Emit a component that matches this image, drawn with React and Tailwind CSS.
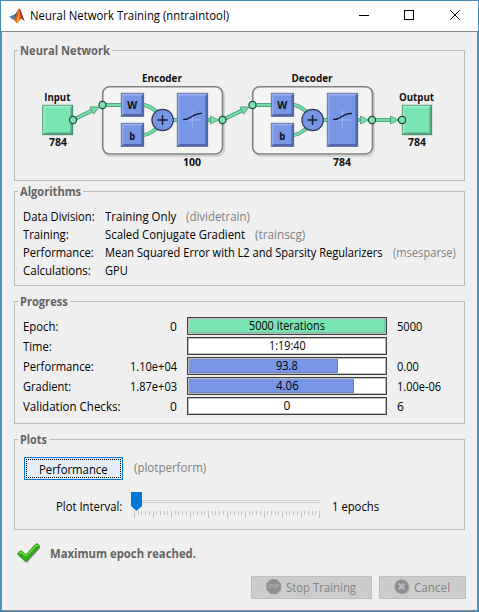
import { useLayoutEffect, useRef, useState } from 'react';

// Text condensed or widened horizontally so it occupies exactly `w` pixels.
function Fit({ w, className = '', children }) {
  const ref = useRef(null);
  const [scale, setScale] = useState(1);
  useLayoutEffect(() => {
    setScale(w / ref.current.offsetWidth);
  }, [w, children]);
  return (
    <span className={'block shrink-0 ' + className} style={{ width: w }}>
      <span ref={ref} className="inline-block origin-left whitespace-nowrap align-top" style={{ transform: `scaleX(${scale})` }}>
        {children}
      </span>
    </span>
  );
}

function Group({ title, w, className, children }) {
  return (
    <section className={'ml-3 w-[451px] border border-[#bababa] ' + className}>
      <div className="-mt-[9px] ml-[3px] flex h-4 w-fit bg-[#efefef] pr-0.5 pl-0.5 font-bold leading-[18px] text-[#646464]">
        <Fit w={w}>{title}</Fit>
      </div>
      {children}
    </section>
  );
}

function Square({ x, y, w, h, kind }) {
  const c = kind === 'green'
    ? { f: '#7ae5b3', hi: '#9df0cb', lo: '#58a683', s: '#4b8a6c' }
    : { f: '#7796e6', hi: '#9ab2f2', lo: '#4f67ad', s: '#5d6b94' };
  return (
    <g>
      <rect x={x} y={y} width={w} height={h} fill={c.f} />
      <path d={`M${x} ${y}h${w}l-2.5 2.5h${5 - w}z`} fill={c.hi} />
      <path d={`M${x} ${y}l2.5 2.5v${h - 5}L${x} ${y + h}z`} fill={c.hi} opacity=".7" />
      <path d={`M${x + w} ${y}v${h}h${-w}l2.5 -2.5h${w - 5}v${5 - h}z`} fill={c.lo} />
      <rect x={x + 0.25} y={y + 0.25} width={w - 0.5} height={h - 0.5} fill="none" stroke={c.s} strokeWidth=".8" />
    </g>
  );
}

function Wire({ d }) {
  return (
    <g fill="none">
      <path d={d} stroke="#4f9876" strokeWidth="4" />
      <path d={d} stroke="#74dbab" strokeWidth="2.4" />
    </g>
  );
}

function Head({ x, y, angle = 0 }) {
  return <path d="M0 0L-8 -4V4Z" fill="#74dfae" stroke="#4f9876" strokeWidth=".8" transform={`translate(${x} ${y}) rotate(${angle})`} />;
}

function Port({ x, y }) {
  return <circle cx={x} cy={y} r="3.6" fill="#7ae5b3" stroke="#26483a" strokeWidth="1.2" />;
}

function Caption({ x, y, w, children }) {
  return (
    <text x={x} y={y} textAnchor="middle" textLength={w} lengthAdjust="spacingAndGlyphs" className="text-[10.5px] font-bold" fill="#111">
      {children}
    </text>
  );
}

function Layer({ x, name, nameW, size }) {
  return (
    <g transform={`translate(${x} 0)`}>
      <rect x="104" y="88" width="120" height="68" rx="7" fill="none" stroke="#d2d2d2" strokeWidth="2" />
      <rect x="102.7" y="86.7" width="119.8" height="67.3" rx="7" fill="#f4f4f4" stroke="#818181" strokeWidth="1.6" />
      <Wire d="M103 105H122" />
      <Wire d="M143 105C150 105 152 109 159 113" />
      <Wire d="M143 135C150 135 152 131 159 127" />
      <Wire d="M170 120H178" />
      <Wire d="M207 120H213" />
      <Head x={218.5} y={120} />
      <Square x={121} y={93} w={23} h={23.5} kind="blue" />
      <Square x={121} y={123} w={23} h={23.5} kind="blue" />
      <Square x={177} y={93} w={31} h={53.5} kind="blue" />
      <circle cx="162.6" cy="120" r="10.7" fill="#7796e6" stroke="#30384f" strokeWidth="1.2" />
      <path d="M157.5 120h10M162.5 115v10" stroke="#161c2d" strokeWidth="1.4" />
      <path d="M183 120h18M192.3 110.5v18.5" stroke="#a9baf0" strokeWidth=".9" />
      <path d="M183 119.7C193 119.7 190 113.5 202 113.3" fill="none" stroke="#10182c" strokeWidth="1.2" />
      <Caption x={132.2} y={109} w={10}>W</Caption>
      <Caption x={132.2} y={139.5} w={6}>b</Caption>
      <Caption x={162} y={81.5} w={nameW}>{name}</Caption>
      <Caption x={192} y={166} w={18}>{size}</Caption>
      <Port x={102.5} y={105} />
    </g>
  );
}

function Network() {
  return (
    <svg className="-mt-2 block h-[130px] w-[449px]" viewBox="15 50 449 130">
      <Wire d="M73 120L95 109" />
      <Layer x={0} name="Encoder" nameW={40} size="100" />
      <Wire d="M222.5 120L245 109" />
      <Layer x={150} name="Decoder" nameW={41} size="784" />
      <Wire d="M372 120H394" />
      <Head x={99} y={107} angle={-26} />
      <Head x={249} y={107} angle={-26} />
      <Head x={398.5} y={120} />
      <Square x={42.5} y={105} w={30.5} h={30} kind="green" />
      <Square x={402} y={105} w={30} h={30} kind="green" />
      <Port x={73} y={120} />
      <Port x={222.5} y={120} />
      <Port x={372} y={120} />
      <Port x={402} y={120} />
      <Caption x={57.3} y={100.5} w={26}>Input</Caption>
      <Caption x={58} y={146} w={18}>784</Caption>
      <Caption x={416.5} y={100.5} w={35}>Output</Caption>
      <Caption x={417} y={146} w={18}>784</Caption>
    </svg>
  );
}

const algorithms = [
  ['Data Division:', 72, 'Training Only', 71, '(dividetrain)', 64],
  ['Training:', 46, 'Scaled Conjugate Gradient', 140, '(trainscg)', 50],
  ['Performance:', 71, 'Mean Squared Error with L2 and Sparsity Regularizers', 278, '(msesparse)', 63],
  ['Calculations:', 68, 'GPU', 23],
];

const progress = [
  { label: 'Epoch:', lw: 36, from: '0', fw: 7, text: '5000 iterations', tw: 76, to: '5000', ow: 25, fill: 'w-[196px] bg-[#7ae5b3] border-[#67c89b]' },
  { label: 'Time:', lw: 29, text: '1:19:40', tw: 37 },
  { label: 'Performance:', lw: 71, from: '1.10e+04', fw: 47, text: '93.8', tw: 22, to: '0.00', ow: 22, fill: 'w-[149px] bg-[#7796e6] border-[#6580c8]' },
  { label: 'Gradient:', lw: 48, from: '1.87e+03', fw: 47, text: '4.06', tw: 23, to: '1.00e-06', ow: 44, fill: 'w-[165px] bg-[#7796e6] border-[#6580c8]' },
  { label: 'Validation Checks:', lw: 97, from: '0', fw: 7, text: '0', tw: 7, to: '6', ow: 7 },
];

function ProgressRow({ row }) {
  return (
    <div className="flex h-[18px] leading-5">
      <div className="w-[107px]"><Fit w={row.lw}>{row.label}</Fit></div>
      <div className="flex w-[47px] justify-end">{row.from && <Fit w={row.fw}>{row.from}</Fit>}</div>
      <div className="ml-2.5 grid h-[18px] w-[200px] border border-[#404040] bg-white">
        <div className="col-start-1 row-start-1 border border-[#bcbcbc]">
          {row.fill && <div className={'h-3.5 border-r border-b ' + row.fill} />}
        </div>
        <div className="z-10 col-start-1 row-start-1 flex justify-center leading-[15px]">
          <Fit w={row.tw}>{row.text}</Fit>
        </div>
      </div>
      <div className="ml-2.5">{row.to && <Fit w={row.ow}>{row.to}</Fit>}</div>
    </div>
  );
}

function Slider() {
  return (
    <svg className="block h-[27px] w-[192px]" viewBox="130 491 192 27">
      <rect x="136.5" y="500.5" width="183" height="2" fill="#e9e9e9" stroke="#d3d3d3" />
      {Array.from({ length: 51 }, (_, i) => (
        <rect key={i} x={Math.round(134 + i * 3.7)} y="511" width="1" height={i % 5 === 0 ? 7 : 4} fill="#c2c2c2" />
      ))}
      <path d="M131 492h11v14l-5.5 5l-5.5 -5z" fill="#0078d7" />
    </svg>
  );
}

function MatlabLogo() {
  return (
    <svg className="ml-2 h-4 w-4" viewBox="0 0 16 16">
      <path d="M0 8.8L5 6.8L7.5 8.7L4.2 11.8Z" fill="#3f83b4" />
      <path d="M5 6.8C7 6.5 8 3 10 .5L8.5 7L6.2 10Z" fill="#285d83" />
      <path d="M10 .4C8.6 2 8 7 4.2 11.8C6 11.5 7 15.5 8.3 15.2C10 14.7 11 10.5 12.7 10.8L15.8 13C13.5 10 12 .5 10 .4Z" fill="#df5a22" />
      <path d="M10 .4C9.5 5 9 9 7.2 14C8 15.7 9 14.7 9.8 13.3C10.5 9 10.8 4 10 .4Z" fill="#f5a335" />
      <path d="M10.2 1C11.5 4 11.5 8 12.7 10.8L15.8 13C13.5 9 12 1 10.2 1Z" fill="#a52c22" />
    </svg>
  );
}

export default function App() {
  return (
    <div className="flex h-[612px] w-[479px] flex-col border border-[#4a8ab5] bg-white font-['Open_Sans',sans-serif] text-[12px] text-black">
      <header className="flex h-[30px] items-center">
        <MatlabLogo />
        <Fit w={199} className="ml-[5px] leading-[30px]">Neural Network Training (nntraintool)</Fit>
        <svg className="ml-auto h-[30px] w-[139px]" viewBox="339 1 139 30" fill="none" stroke="#000">
          <path d="M359 15.5h10" />
          <rect x="404.5" y="10.5" width="9" height="9" />
          <path d="M450.3 10.3l9.4 9.4M459.7 10.3l-9.4 9.4" />
        </svg>
      </header>
      <main className="h-[580px] border border-[#868895] bg-[#efefef]">
        <Group title="Neural Network" w={90} className="mt-[18px] h-[131px]">
          <Network />
        </Group>

        <Group title="Algorithms" w={61} className="mt-2.5 h-[95px]">
          <div className="mt-[9px] ml-2">
            {algorithms.map(([label, lw, value, vw, fn, fw]) => (
              <div key={label} className="flex h-[18px] leading-[18px]">
                <div className="w-[82px]"><Fit w={lw}>{label}</Fit></div>
                <Fit w={vw}>{value}</Fit>
                {fn && <Fit w={fw} className="ml-2.5 text-[#808080]">{fn}</Fit>}
              </div>
            ))}
          </div>
        </Group>

        <Group title="Progress" w={48} className="mt-[15px] h-[123px]">
          <div className="mt-2 ml-2 flex flex-col gap-0.5">
            {progress.map((row) => <ProgressRow key={row.label} row={row} />)}
          </div>
        </Group>

        <Group title="Plots" w={27} className="mt-[15px] h-[91px]">
          <div className="mt-[9px] ml-[9px] flex items-center">
            <div className="flex h-[23px] w-[99px] border border-[#0078d7] bg-[#e5edf8] p-px">
              <button className="flex flex-1 justify-center border border-dotted border-black leading-[19px]">
                <Fit w={69}>Performance</Fit>
              </button>
            </div>
            <Fit w={72} className="ml-[11px] leading-6 text-[#808080]">(plotperform)</Fit>
          </div>
          <div className="mt-[11px] ml-[41px] flex h-[27px] leading-[31px]">
            <Fit w={66}>Plot Interval:</Fit>
            <div className="ml-2"><Slider /></div>
            <Fit w={47} className="ml-2.5">1 epochs</Fit>
          </div>
        </Group>

        <div className="mt-3 ml-[15px] flex h-[23px]">
          <svg className="h-[23px] w-[25px]" viewBox="0 0 25 23">
            <path d="M2 13L5 10.5L9.5 14.5L20 3L23.5 6L10 21Z" fill="#777" opacity=".65" />
            <path d="M.6 12.2C.3 11 3.6 8.2 4.8 9L8.9 12.8L18.8 2C20 1 23.5 3.7 22.4 5.2L9.7 19C9 19.6 8.2 19.5 7.5 18.8Z" fill="#2fae18" stroke="#208d13" strokeWidth=".8" />
            <path d="M2 11.5L4.5 10L9 14.3L19.5 3.2L21 4" fill="none" stroke="#82df5c" strokeWidth="1.1" />
          </svg>
          <Fit w={146} className="ml-2 font-bold leading-6 text-[#646464]">Maximum epoch reached.</Fit>
        </div>

        <div className="mt-[11px] mr-[11px] flex justify-end gap-[7px] text-[#838383]">
          <button className="flex h-[23px] w-[121px] items-center border border-[#bfbfbf] bg-[#cccccc] pl-3.5 leading-[21px]">
            <svg className="mr-1 mb-0.5 h-4 w-4" viewBox="0 0 16 16">
              <path d="M5.3 1.5h6l4.2 4.2v5.5l-4.2 4.2h-6L1.5 11.2V5.7z" fill="#b3b3b3" />
              <path d="M4.6 .3h6l4.2 4.3v6l-4.2 4.2h-6L.4 10.6v-6z" fill="#8f8f8f" />
              <text x="7.6" y="9.2" textAnchor="middle" textLength="10" lengthAdjust="spacingAndGlyphs" className="text-[4.5px] font-bold" fill="#b4b4b4">STOP</text>
            </svg>
            <Fit w={70}>Stop Training</Fit>
          </button>
          <button className="flex h-[23px] w-[87px] items-center border border-[#bfbfbf] bg-[#cccccc] pl-3.5 leading-[21px]">
            <svg className="mr-1 mb-0.5 h-4 w-4" viewBox="0 0 16 16">
              <circle cx="8.5" cy="8.5" r="7.2" fill="#b0b0b0" />
              <circle cx="7.6" cy="7.5" r="7.1" fill="#8f8f8f" />
              <path d="M4.8 4.7l5.6 5.6M10.4 4.7l-5.6 5.6" stroke="#bdbdbd" strokeWidth="2.3" />
            </svg>
            <Fit w={36}>Cancel</Fit>
          </button>
        </div>
      </main>
    </div>
  );
}
